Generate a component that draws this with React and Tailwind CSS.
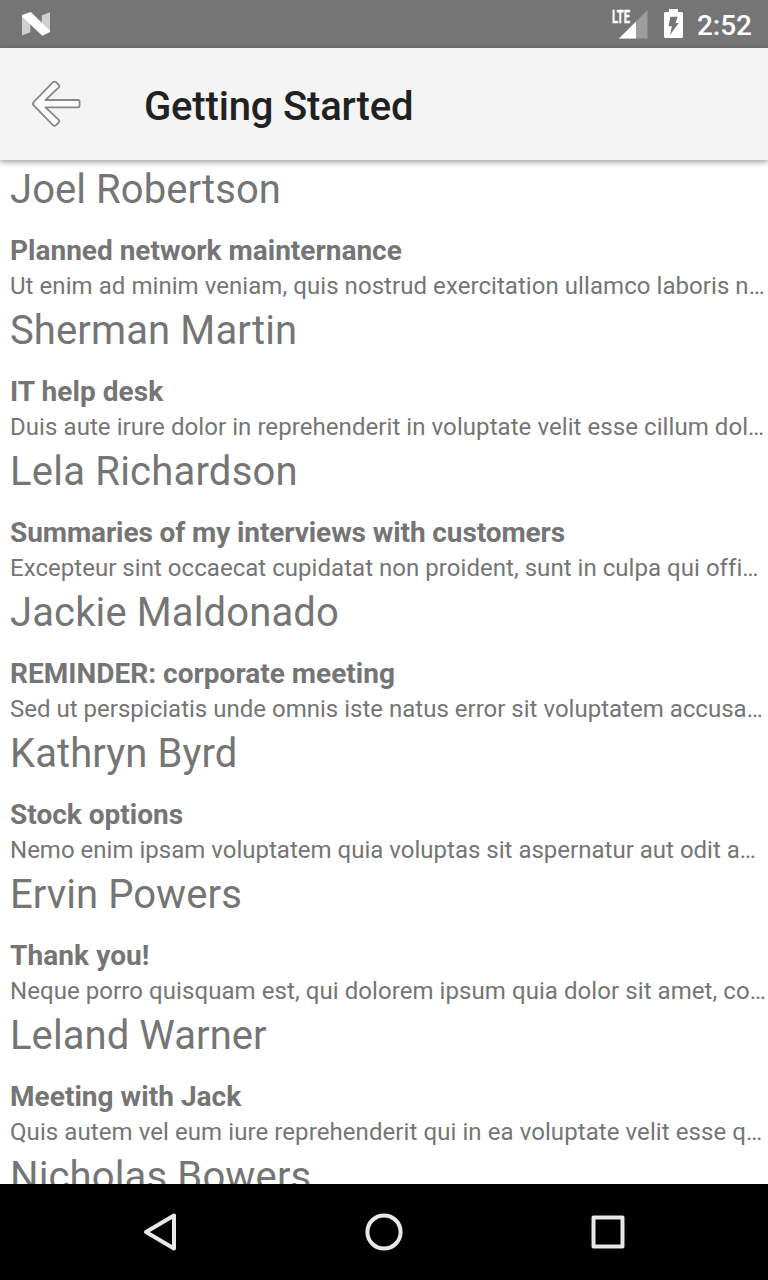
const messages = [
  { sender: ["Joel Robertson", "tracking-[0.07px]"], subject: ["Planned network mainternance", ""], body: ["Ut enim ad minim veniam, quis nostrud exercitation ullamco laboris n…", "tracking-[0.06px]"] },
  { sender: ["Sherman Martin", "tracking-[0.12px]"], subject: ["IT help desk", "tracking-[0.06px]"], body: ["Duis aute irure dolor in reprehenderit in voluptate velit esse cillum dol…", "tracking-[0.07px]"] },
  { sender: ["Lela Richardson", "tracking-[0.22px]"], subject: ["Summaries of my interviews with customers", "tracking-[-0.1px]"], body: ["Excepteur sint occaecat cupidatat non proident, sunt in culpa qui offi…", "tracking-[0.04px]"] },
  { sender: ["Jackie Maldonado", "tracking-[0.13px]"], subject: ["REMINDER: corporate meeting", "tracking-[0.02px]"], body: ["Sed ut perspiciatis unde omnis iste natus error sit voluptatem accusa…", "tracking-[0.01px]"] },
  { sender: ["Kathryn Byrd", "tracking-[0.09px]"], subject: ["Stock options", "tracking-[0.02px]"], body: ["Nemo enim ipsam voluptatem quia voluptas sit aspernatur aut odit a…", "tracking-[0.01px]"] },
  { sender: ["Ervin Powers", "tracking-[0.07px]"], subject: ["Thank you!", "tracking-[0.09px]"], body: ["Neque porro quisquam est, qui dolorem ipsum quia dolor sit amet, co…", "tracking-[0.07px]"] },
  { sender: ["Leland Warner", "tracking-[0.07px]"], subject: ["Meeting with Jack", "tracking-[0.04px]"], body: ["Quis autem vel eum iure reprehenderit qui in ea voluptate velit esse q…", "tracking-[0.08px]"] },
  { sender: ["Nicholas Bowers", "tracking-[0.14px]"], subject: ["", ""], body: ["", ""] },
];

function StatusBar() {
  return (
    <div className="flex h-12 shrink-0 items-center bg-[#757575] pl-[22px] pr-4 text-white">
      <svg width="28" height="24" viewBox="0 0 28 24">
        <path d="M0 3.200 8.300 8v12.300L0 23.500zM19.700 3.500 28 .300v19.500L19.700 15z" fill="#cfcfcf" />
        <path d="M0 4.200V3.200L8.800.200 28 19V19.800L20.300 23.600z" fill="#fff" stroke="#fff" strokeWidth="0.500" />
      </svg>
      <div className="ml-auto flex items-center">
        <svg className="overflow-visible" width="36" height="30" viewBox="0 0 36 30">
          <path d="M35.500 1v28.500H7z" fill="#9e9e9e" />
          <path d="M24 12.500v17H7z" fill="#fff" />
          <text x="0" y="13.700" textLength="18" lengthAdjust="spacingAndGlyphs" fill="#fff" stroke="#fff" strokeWidth="0.400" className="font-['Roboto',sans-serif] text-[17.5px] font-bold">LTE</text>
        </svg>
        <svg className="ml-4" width="19" height="30" viewBox="0 0 19 30">
          <path d="M5 0h9V3h3.500A1.500 1.500 0 0 1 19 4.500V27.500a1.500 1.500 0 0 1-1.500 1.500h-16A1.500 1.500 0 0 1 0 27.500V4.500A1.500 1.500 0 0 1 1.500 3H5z" fill="#fff" />
          <path d="M6.300 7.800h7.500l-2.300 6.200h3.300L6 26l1.900-8.800H4.600z" fill="#757575" />
        </svg>
        <span className="ml-[14px] mt-[3px] text-[28px] font-medium leading-[33px]">2:52</span>
      </div>
    </div>
  );
}

function Header() {
  return (
    <header className="z-10 flex h-28 shrink-0 items-center bg-[#f4f4f4] pl-8 shadow-[0_2px_6px_rgba(0,0,0,0.4)]">
      <svg width="50" height="48" viewBox="0 0.3 50 48">
        <path
          d="M1.400 24Q.400 23.500 1.400 22.600L21 2.500Q22.500 1.300 24 2.500L26.500 5Q27.900 6.500 26.500 8L13.500 20.300H46Q47.600 20.300 47.600 22V25.900Q47.600 27.600 46 27.600H13.500L26.500 40Q27.900 41.500 26.500 43L24 45.500Q22.500 46.900 21 45.500L1.400 25.400Q.400 24.500 1.400 24Z"
          fill="#fafafa" stroke="#888" strokeWidth="1.800" strokeLinejoin="round"
        />
      </svg>
      <h1 className="ml-[62px] mt-[5px] text-[40px] font-medium leading-[47px] tracking-[-0.17px] text-[#212121]">Getting Started</h1>
    </header>
  );
}

function Message({ sender, subject, body }) {
  return (
    <li className="flex h-[141px] shrink-0 flex-col whitespace-nowrap pl-[10px]">
      <div className={`text-[40px] leading-[47px] ${sender[1]}`}>{sender[0]}</div>
      <div className={`mt-[21px] text-[28px] font-bold leading-[33px] ${subject[1]}`}>{subject[0]}</div>
      <div className={`mt-[5px] text-[24px] leading-[28px] ${body[1]}`}>{body[0]}</div>
    </li>
  );
}

export default function App() {
  return (
    <div className="flex h-[1280px] w-[768px] flex-col overflow-hidden bg-white font-['Roboto',sans-serif]">
      <StatusBar />
      <Header />
      <ul className="flex min-h-0 flex-1 flex-col overflow-hidden pt-[6px] text-[#757575]">
        {messages.map((message) => (
          <Message key={message.sender[0]} {...message} />
        ))}
      </ul>
      <nav className="flex h-24 shrink-0 items-center justify-center gap-44 bg-black">
        <svg width="48" height="48" viewBox="0 0 48 48" fill="none" stroke="#e8e8e8" strokeWidth="4" strokeLinejoin="round">
          <path d="M38 7.500v33L10 24z" />
        </svg>
        <svg width="48" height="48" viewBox="0 0 48 48" fill="none" stroke="#e8e8e8" strokeWidth="4">
          <circle cx="24" cy="24" r="16.600" />
        </svg>
        <svg width="48" height="48" viewBox="0 0 48 48" fill="none" stroke="#e8e8e8" strokeWidth="4" strokeLinejoin="round">
          <path d="M9.500 9.500h29v29h-29z" />
        </svg>
      </nav>
    </div>
  );
}
